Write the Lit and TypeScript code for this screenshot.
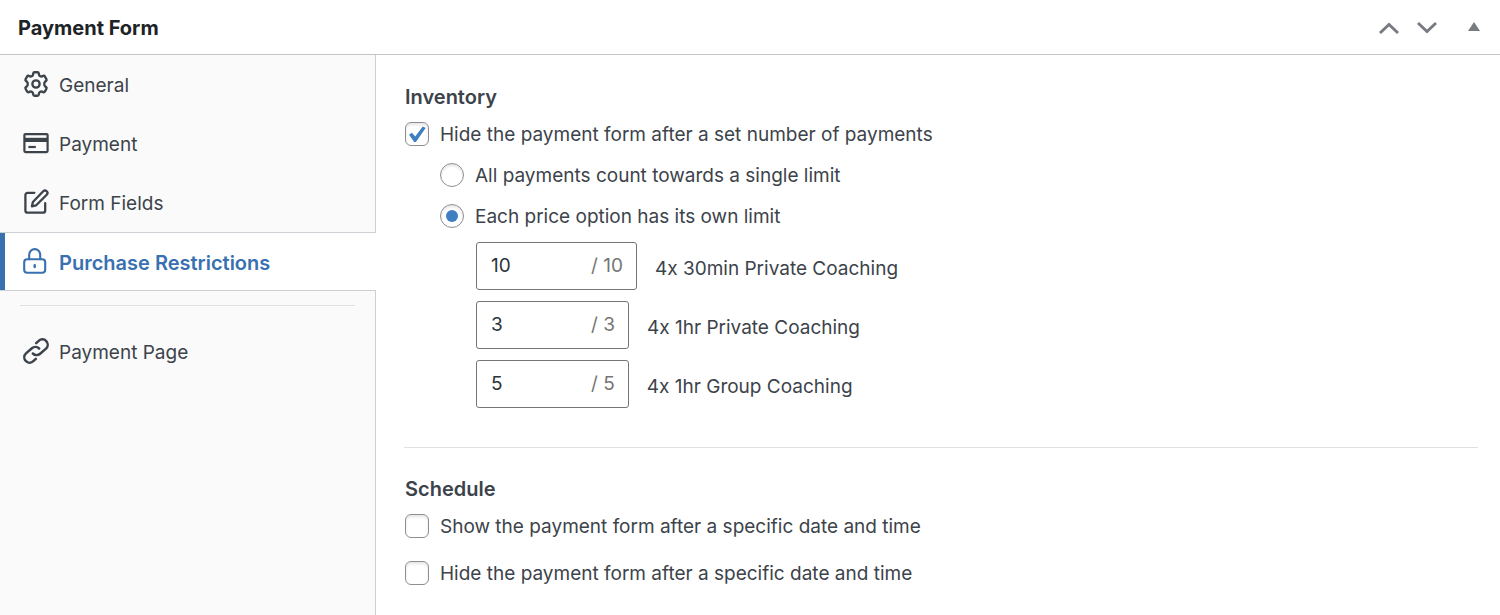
import { LitElement, html, css, svg } from "lit";
import { customElement, state } from "lit/decorators.js";
import { classMap } from "lit/directives/class-map.js";

const icons = {
  gear: svg`<svg class="icon" viewBox="2 2 20 20" fill="none" stroke="currentColor" stroke-width="1.8" stroke-linejoin="round" aria-hidden="true">
    <path d="M9.800 4c.1-.6.5-1.040 1.100-1.040h2.200c.6 0 1 .44 1.100 1.040l.12.900c.06.5.4.8.740 1l.3.180c.35.2.75.260 1.180.080l.9-.36c.55-.2 1.150 0 1.450.5l1.100 1.900c.3.520.18 1.120-.28 1.480l-.8.620c-.36.3-.5.680-.5 1.080v1.240c0 .4.14.780.5 1.080l.8.620c.46.36.58.960.28 1.480l-1.100 1.900c-.3.5-.9.700-1.450.5l-.9-.36c-.43-.18-.83-.120-1.180.080l-.3.180c-.34.2-.68.500-.74 1l-.12.900c-.1.600-.5 1.040-1.100 1.040h-2.200c-.6 0-1-.44-1.100-1.040l-.12-.900c-.06-.5-.4-.8-.74-1l-.3-.180c-.35-.2-.75-.260-1.180-.080l-.9.360c-.55.2-1.150 0-1.450-.5l-1.100-1.900c-.3-.520-.18-1.120.28-1.480l.8-.620c.36-.3.5-.680.5-1.080v-1.240c0-.4-.14-.780-.5-1.080l-.8-.620c-.46-.36-.58-.960-.28-1.480l1.100-1.900c.3-.5.9-.7 1.450-.5l.9.360c.43.180.83.120 1.180-.080l.3-.180c.34-.2.68-.5.740-1z"/>
    <circle cx="12" cy="12" r="2.800"/></svg>`,
  card: svg`<svg class="icon" viewBox="0 0 26 26" fill="none" stroke="currentColor" stroke-width="2.2" aria-hidden="true">
    <rect x="1.4" y="4.1" width="23.200" height="18" rx="1"/><path d="M1.6 9.9h22.8" stroke-width="4.200"/><path d="M5.400 17h7.400" stroke-width="2.200"/></svg>`,
  edit: svg`<svg class="icon" viewBox="0 0 26 26" fill="none" stroke="currentColor" stroke-width="2.300" stroke-linecap="round" stroke-linejoin="round" aria-hidden="true">
    <path d="M11.4 3.8H4.6a2.2 2.2 0 0 0-2.2 2.2v15.4a2.2 2.2 0 0 0 2.2 2.2h15.4a2.2 2.2 0 0 0 2.2-2.2v-7.2"/>
    <path d="M20.2 2.3a2.35 2.35 0 0 1 3.5 3.5L13.2 16.3l-4.3 1 1-4.300z"/></svg>`,
  lock: svg`<svg class="icon" viewBox="0 0 26 26" fill="none" stroke="currentColor" stroke-width="2.100" stroke-linecap="round" aria-hidden="true">
    <rect x="1.2" y="11.3" width="21" height="13.5" rx="3"/><path d="M6.2 11.3V6.6a5.5 5.5 0 0 1 11 0v4.7"/><path d="M11.7 17.2v1.8" stroke-width="2.4"/></svg>`,
  link: svg`<svg class="icon" viewBox="0 0 26 26" fill="none" stroke="currentColor" stroke-width="2.500" stroke-linecap="round" aria-hidden="true">
    <path d="M9.9 15.5a5.3 5.3 0 0 0 7.2.3l5.900-5.200a5.2 5.2 0 0 0-7.300-7.800l-2.500 2.300"/>
    <path d="M16.1 10.500a5.3 5.3 0 0 0-7.2-.3l-5.900 5.200a5.2 5.2 0 0 0 7.300 7.800l2.500-2.300"/></svg>`,
};

const sections = [
  { id: "general", label: "General", icon: icons.gear },
  { id: "payment", label: "Payment", icon: icons.card },
  { id: "fields", label: "Form Fields", icon: icons.edit },
  { id: "restrictions", label: "Purchase Restrictions", icon: icons.lock },
];

const prices = [
  { id: "p1", label: "4x 30min Private Coaching", left: 10, total: 10 },
  { id: "p2", label: "4x 1hr Private Coaching", left: 3, total: 3 },
  { id: "p3", label: "4x 1hr Group Coaching", left: 5, total: 5 },
];

@customElement("app-root")
export class AppRoot extends LitElement {
  @state() private active = "restrictions";

  static styles = css`
    :host {
      display: flex;
      flex-direction: column;
      min-height: 100vh;
      box-sizing: border-box;
      background: #fff;
      color: #3c434a;
      font: 19px/24px Inter, "Liberation Sans", sans-serif;
      font-feature-settings: "calt" 0;
    }
    * { box-sizing: border-box; }
    header {
      display: flex;
      align-items: center;
      justify-content: space-between;
      height: 55px;
      padding: 2px 20px 0 18px;
      border-bottom: 1px solid #c3c4c7;
    }
    h2, h3 { margin: 0; font-size: 20px; line-height: 24px; font-weight: 600; }
    h2 { font-weight: 700; color: #1d2327; }
    .handles { display: flex; align-items: center; gap: 16px; }
    .handle {
      display: flex;
      padding: 0;
      border: 0;
      background: none;
      color: #787c82;
      cursor: pointer;
    }
    .handle svg { width: 22px; height: 22px; }
    .handle.toggle { margin-left: 14px; }
    .handle.toggle svg { width: 12px; }
    .body { display: flex; flex: 1; }
    nav {
      flex: none;
      width: 376px;
      background: #fafafa;
      border-right: 1px solid #ccd0d4;
    }
    .tab {
      display: flex;
      align-items: center;
      gap: 10px;
      height: 59px;
      padding-left: 23px;
      color: inherit;
      text-decoration: none;
    }
    .tab.active {
      margin-right: -1px;
      border: solid #ccd0d4;
      border-width: 1px 0;
      box-shadow: inset 5px 0 #3870b0;
      background: #fff;
      color: #3870b0;
      font-size: 20px;
      font-weight: 600;
    }
    .icon { flex: none; width: 26px; height: 26px; margin-bottom: 2px; }
    .tab span, .option span { padding-top: 2px; }
    nav hr { margin: 14px 20px 16px; }
    hr { margin: 0; border: 0; border-top: 1px solid #e0e0e0; }
    main { flex: 1; padding: 30px 22px 28px 28px; }
    .group { padding: 0 1px; }
    .option { display: flex; align-items: center; gap: 11px; height: 24px; }
    .option input {
      appearance: none;
      flex: none;
      display: grid;
      place-content: center;
      width: 24px;
      height: 24px;
      margin: 0;
      border: 1px solid #8c8f94;
      border-radius: 6px;
      background: #fff;
      box-shadow: inset 0 2px 3px rgb(0 0 0 / 10%);
    }
    .option input[type="radio"] { border-radius: 50%; }
    .option input[type="radio"]:checked::before {
      content: "";
      width: 12px;
      height: 12px;
      border-radius: 50%;
      background: #3f7fc1;
    }
    .option input[type="checkbox"]:checked::before {
      content: "";
      width: 18px;
      height: 18px;
      background: #3f7fc1;
      clip-path: polygon(6% 54%, 22% 43%, 40% 64%, 82% 8%, 98% 16%, 44% 95%, 34% 95%);
    }
    h3 + .option { margin-top: 13px; }
    .group > .option + .option { margin-top: 23px; }
    .nested { display: grid; gap: 17px; padding: 17px 0 0 35px; }
    .limits { display: grid; gap: 11px; padding: 14px 0 0 71px; }
    .limit { display: flex; align-items: center; gap: 18px; }
    .field {
      display: flex;
      align-items: center;
      height: 48px;
      padding: 0 13px 0 14px;
      border: 1px solid #757575;
      border-radius: 3px;
      color: #757575;
    }
    .field input {
      width: 100px;
      padding: 0;
      border: 0;
      outline: 0;
      background: none;
      color: #2c3338;
      font: inherit;
    }
    .limit label { padding-top: 5px; }
    .group + hr { margin: 39px 0 29px; }
  `;

  render() {
    return html`
      <header>
        <h2>Payment Form</h2>
        <div class="handles">
          <button class="handle" aria-label="Move up">
            <svg viewBox="0 0 22 22" fill="none" stroke="currentColor" stroke-width="3"><path d="M2 16l9-8.500 9 8.500"/></svg>
          </button>
          <button class="handle" aria-label="Move down">
            <svg viewBox="0 0 22 22" fill="none" stroke="currentColor" stroke-width="3"><path d="M2 6l9 8.500L20 6"/></svg>
          </button>
          <button class="handle toggle" aria-label="Toggle panel">
            <svg viewBox="0 0 12 22" fill="currentColor"><path d="M6 5l6 9H0z"/></svg>
          </button>
        </div>
      </header>
      <div class="body">
        <nav>
          ${sections.map(
            (s) => html`<a
              class=${classMap({ tab: true, active: s.id === this.active })}
              href="#${s.id}"
              @click=${() => (this.active = s.id)}
              >${s.icon}<span>${s.label}</span></a
            >`
          )}
          <hr />
          <a class="tab" href="#page">${icons.link}<span>Payment Page</span></a>
        </nav>
        <main>
          <section class="group">
            <h3>Inventory</h3>
            <label class="option"><input type="checkbox" checked /><span>Hide the payment form after a set number of payments</span></label>
            <div class="nested">
              <label class="option"><input type="radio" name="mode" /><span>All payments count towards a single limit</span></label>
              <label class="option"><input type="radio" name="mode" checked /><span>Each price option has its own limit</span></label>
            </div>
            <div class="limits">
              ${prices.map(
                (p) => html`<div class="limit">
                  <div class="field"><input id=${p.id} type="text" inputmode="numeric" .value=${String(p.left)} /><span>/ ${p.total}</span></div>
                  <label for=${p.id}>${p.label}</label>
                </div>`
              )}
            </div>
          </section>
          <hr />
          <section class="group">
            <h3>Schedule</h3>
            <label class="option"><input type="checkbox" /><span>Show the payment form after a specific date and time</span></label>
            <label class="option"><input type="checkbox" /><span>Hide the payment form after a specific date and time</span></label>
          </section>
        </main>
      </div>
    `;
  }
}
